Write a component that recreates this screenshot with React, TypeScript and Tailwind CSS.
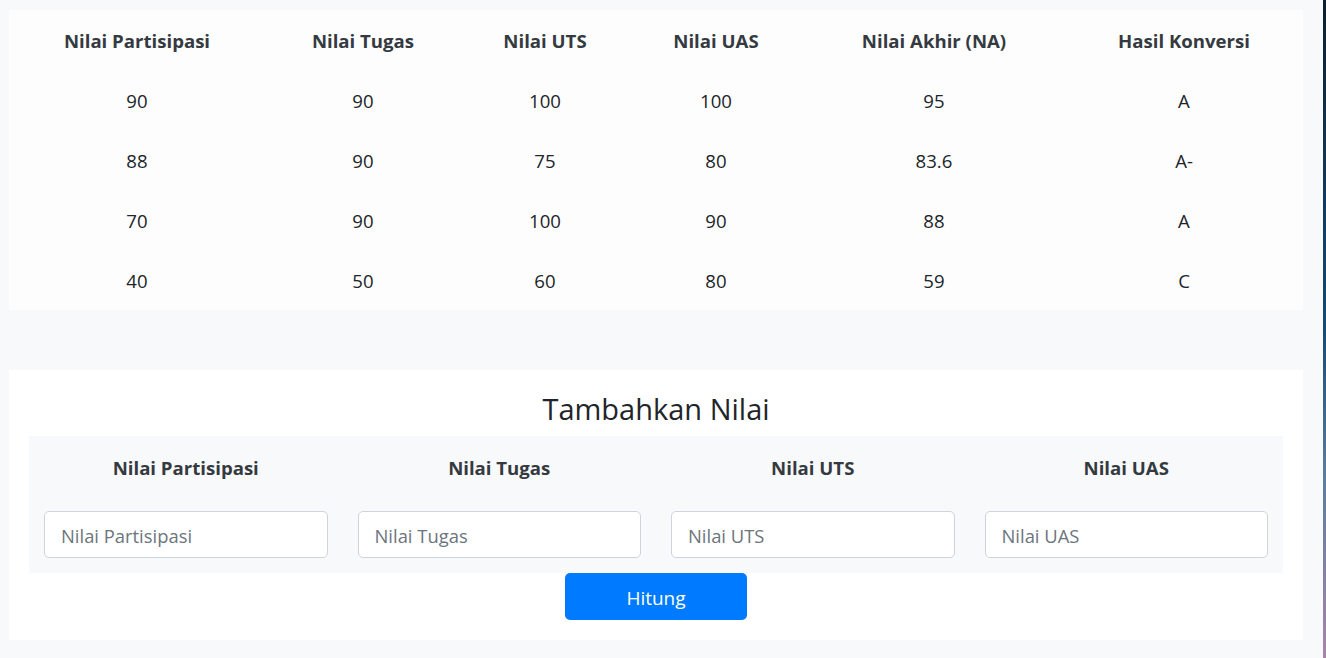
import { useState } from "react";

type Row = {
  partisipasi: number;
  tugas: number;
  uts: number;
  uas: number;
  na: string;
  huruf: string;
};

const rows: Row[] = [
  { partisipasi: 90, tugas: 90, uts: 100, uas: 100, na: "95", huruf: "A" },
  { partisipasi: 88, tugas: 90, uts: 75, uas: 80, na: "83.6", huruf: "A-" },
  { partisipasi: 70, tugas: 90, uts: 100, uas: 90, na: "88", huruf: "A" },
  { partisipasi: 40, tugas: 50, uts: 60, uas: 80, na: "59", huruf: "C" },
];

const fields = [
  { key: "partisipasi", label: "Nilai Partisipasi" },
  { key: "tugas", label: "Nilai Tugas" },
  { key: "uts", label: "Nilai UTS" },
  { key: "uas", label: "Nilai UAS" },
];

export default function App() {
  const [values, setValues] = useState<Record<string, string>>({});

  return (
    <div
      className="flex min-h-screen"
      style={{ fontFamily: '"Open Sans", "Noto Sans", sans-serif' }}
    >
      <main className="flex-1 bg-[#f8f9fa] pt-[10px] pl-[9px] pr-[20px]">
        <section className="h-[300px] bg-[#fdfdfd]">
          <table className="w-full table-fixed text-center text-[18.6px] text-[#212529]">
            <colgroup>
              <col className="w-[256px]" />
              <col className="w-[196px]" />
              <col className="w-[168px]" />
              <col className="w-[174px]" />
              <col className="w-[262px]" />
              <col className="w-[238px]" />
            </colgroup>
            <thead>
              <tr className="h-[60px] font-bold text-[#343a40]">
                <th className="pt-[2px]">Nilai Partisipasi</th>
                <th className="pt-[2px]">Nilai Tugas</th>
                <th className="pt-[2px]">Nilai UTS</th>
                <th className="pt-[2px]">Nilai UAS</th>
                <th className="pt-[2px]">Nilai Akhir (NA)</th>
                <th className="pt-[2px]">Hasil Konversi</th>
              </tr>
            </thead>
            <tbody>
              {rows.map((row, i) => (
                <tr key={i} className="h-[60px] [&>td]:pt-[2px]">
                  <td>{row.partisipasi}</td>
                  <td>{row.tugas}</td>
                  <td>{row.uts}</td>
                  <td>{row.uas}</td>
                  <td>{row.na}</td>
                  <td>{row.huruf}</td>
                </tr>
              ))}
            </tbody>
          </table>
        </section>

        <section className="mt-[60px] flex h-[270px] flex-col items-center bg-white px-[20px] pb-[20px]">
          <h2 className="flex h-[66px] items-center pt-[12px] text-[29px] font-medium text-[#212529]">
            Tambahkan Nilai
          </h2>
          <div className="grid h-[137px] w-full grid-cols-4 bg-[#f8f9fa]">
            {fields.map((f) => (
              <div key={f.key} className="flex flex-col items-center px-[15px]">
                <label className="flex h-[62px] items-center pt-[1px] text-[18.6px] font-bold text-[#343a40]">
                  {f.label}
                </label>
                <input
                  value={values[f.key] ?? ""}
                  onChange={(e) => setValues({ ...values, [f.key]: e.target.value })}
                  placeholder={f.label}
                  className="mt-[13px] h-[47px] w-full rounded-[5px] border border-[#ced4da] bg-white px-[16px] pt-[2px] text-[18.4px] text-[#495057] outline-none placeholder:text-[#6c757d]"
                />
              </div>
            ))}
          </div>
          <button className="h-[47px] w-[182px] rounded-[5px] bg-[#007bff] pt-[3px] text-[19px] text-white">
            Hitung
          </button>
        </section>
      </main>
      <div className="w-[3px] bg-[linear-gradient(to_bottom,#0d1f30_0%,#123a5a_30%,#184a70_50%,#5a7d9c_72%,#a985ab_100%)]" />
    </div>
  );
}
